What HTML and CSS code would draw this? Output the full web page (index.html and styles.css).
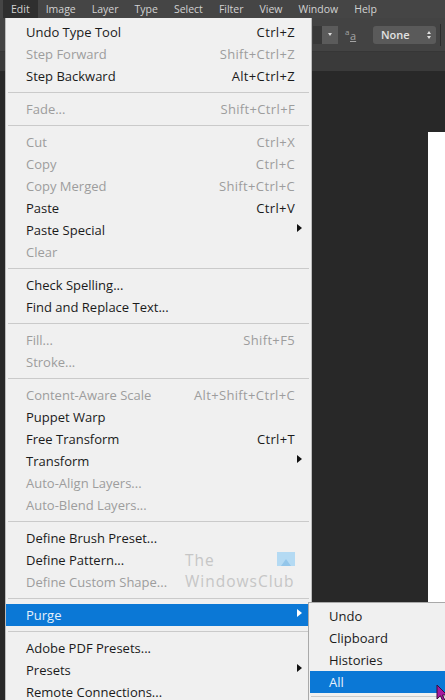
FILE: index.html
```html
<!DOCTYPE html>
<html>
<head>
<meta charset="utf-8">
<link rel="stylesheet" href="styles.css">
</head>
<body>
<div class="app">
  <div class="menubar">
    <span class="mb-item active">Edit</span>
    <span class="mb-item">Image</span>
    <span class="mb-item">Layer</span>
    <span class="mb-item">Type</span>
    <span class="mb-item">Select</span>
    <span class="mb-item">Filter</span>
    <span class="mb-item">View</span>
    <span class="mb-item">Window</span>
    <span class="mb-item">Help</span>
  </div>
  <div class="toolbar">
    <span class="tb-field"></span>
    <span class="tb-btn"><span class="tb-caret"></span></span>
    <span class="tb-aa"><span class="aa-sm">a</span><span class="aa-lg">a</span></span>
    <span class="tb-select">None<span class="tb-updown"><span class="up"></span><span class="down"></span></span></span>
    <span class="tb-divider"></span>
  </div>
  <div class="tabstrip"></div>
  <div class="canvas"><div class="doc"></div></div>

  <div class="menu">
    <div class="row"><span class="label">Undo Type Tool</span><span class="key">Ctrl+Z</span><span class="arrow-cell"></span></div>
    <div class="row dis"><span class="label">Step Forward</span><span class="key">Shift+Ctrl+Z</span><span class="arrow-cell"></span></div>
    <div class="row"><span class="label">Step Backward</span><span class="key">Alt+Ctrl+Z</span><span class="arrow-cell"></span></div>
    <div class="sep"></div>
    <div class="row dis"><span class="label">Fade...</span><span class="key">Shift+Ctrl+F</span><span class="arrow-cell"></span></div>
    <div class="sep"></div>
    <div class="row dis"><span class="label">Cut</span><span class="key">Ctrl+X</span><span class="arrow-cell"></span></div>
    <div class="row dis"><span class="label">Copy</span><span class="key">Ctrl+C</span><span class="arrow-cell"></span></div>
    <div class="row dis"><span class="label">Copy Merged</span><span class="key">Shift+Ctrl+C</span><span class="arrow-cell"></span></div>
    <div class="row"><span class="label">Paste</span><span class="key">Ctrl+V</span><span class="arrow-cell"></span></div>
    <div class="row"><span class="label">Paste Special</span><span class="key"></span><span class="arrow-cell"><span class="tri"></span></span></div>
    <div class="row dis"><span class="label">Clear</span><span class="key"></span><span class="arrow-cell"></span></div>
    <div class="sep"></div>
    <div class="row"><span class="label">Check Spelling...</span><span class="key"></span><span class="arrow-cell"></span></div>
    <div class="row"><span class="label">Find and Replace Text...</span><span class="key"></span><span class="arrow-cell"></span></div>
    <div class="sep"></div>
    <div class="row dis"><span class="label">Fill...</span><span class="key">Shift+F5</span><span class="arrow-cell"></span></div>
    <div class="row dis"><span class="label">Stroke...</span><span class="key"></span><span class="arrow-cell"></span></div>
    <div class="sep"></div>
    <div class="row dis"><span class="label">Content-Aware Scale</span><span class="key">Alt+Shift+Ctrl+C</span><span class="arrow-cell"></span></div>
    <div class="row"><span class="label">Puppet Warp</span><span class="key"></span><span class="arrow-cell"></span></div>
    <div class="row"><span class="label">Free Transform</span><span class="key">Ctrl+T</span><span class="arrow-cell"></span></div>
    <div class="row"><span class="label">Transform</span><span class="key"></span><span class="arrow-cell"><span class="tri"></span></span></div>
    <div class="row dis"><span class="label">Auto-Align Layers...</span><span class="key"></span><span class="arrow-cell"></span></div>
    <div class="row dis"><span class="label">Auto-Blend Layers...</span><span class="key"></span><span class="arrow-cell"></span></div>
    <div class="sep"></div>
    <div class="row"><span class="label">Define Brush Preset...</span><span class="key"></span><span class="arrow-cell"></span></div>
    <div class="row"><span class="label">Define Pattern...</span><span class="key"></span><span class="arrow-cell"></span></div>
    <div class="row dis"><span class="label">Define Custom Shape...</span><span class="key"></span><span class="arrow-cell"></span></div>
    <div class="sep"></div>
    <div class="row hl"><span class="label">Purge</span><span class="key"></span><span class="arrow-cell"><span class="tri"></span></span></div>
    <div class="sep"></div>
    <div class="row"><span class="label">Adobe PDF Presets...</span><span class="key"></span><span class="arrow-cell"></span></div>
    <div class="row"><span class="label">Presets</span><span class="key"></span><span class="arrow-cell"><span class="tri"></span></span></div>
    <div class="row"><span class="label">Remote Connections...</span><span class="key"></span><span class="arrow-cell"></span></div>

    <div class="watermark">
      <div class="wm-line">The</div>
      <div class="wm-line">WindowsClub</div>
      <svg class="wm-icon" width="18" height="14" viewBox="0 0 18 14">
        <rect x="0" y="0" width="18" height="14" fill="#b4daf3"/>
        <polygon points="4,14 9,7 14,14" fill="#93c6ea"/>
      </svg>
    </div>
  </div>

  <div class="submenu">
    <div class="srow">Undo</div>
    <div class="srow">Clipboard</div>
    <div class="srow">Histories</div>
    <div class="srow hl">All</div>
    <div class="ssep"></div>
  </div>

  <svg class="cursor" width="12" height="18" viewBox="0 0 12 18">
    <path d="M1 1 L1 15 L4.4 11.8 L6.8 17 L8.8 16.1 L6.5 11 L11 11 Z" fill="#a8189f" stroke="#3b0a3a" stroke-width="1"/>
  </svg>
</div>
</body>
</html>
```

FILE: styles.css
```css
html, body {
  margin: 0;
  padding: 0;
  background: #282828;
}

.app {
  position: relative;
  width: 445px;
  height: 700px;
  overflow: hidden;
  display: flex;
  flex-direction: column;
  font-family: "Open Sans", "Noto Sans", sans-serif;
}

.menubar {
  height: 18px;
  flex: none;
  background: #454545;
  display: flex;
  align-items: stretch;
  padding-left: 3px;
}

.mb-item {
  padding: 0 8px;
  font-size: 10.5px;
  line-height: 18px;
  color: #d2d2d2;
}

.mb-item.active {
  background: #2f2f2f;
}

.toolbar {
  height: 33px;
  flex: none;
  background: #434343;
  border-bottom: 1px solid #363636;
  display: flex;
  align-items: center;
  padding-left: 313px;
}

.tb-field {
  width: 9px;
  height: 18px;
  background: #383838;
}

.tb-btn {
  width: 16px;
  height: 18px;
  background: #5b5b5b;
  display: flex;
  align-items: center;
  justify-content: center;
}

.tb-caret {
  width: 0;
  height: 0;
  border-left: 2.5px solid transparent;
  border-right: 2.5px solid transparent;
  border-top: 3px solid #dcdcdc;
}

.tb-aa {
  margin-left: 7px;
  width: 15px;
  height: 18px;
  position: relative;
  color: #a4a4a4;
  font-size: 11px;
}

.aa-sm {
  position: absolute;
  left: 0;
  top: 0;
  font-size: 8px;
}

.aa-lg {
  position: absolute;
  left: 5px;
  top: 2px;
  font-size: 11px;
  text-decoration: underline;
}

.tb-select {
  margin-left: 13px;
  width: 63px;
  height: 18px;
  box-sizing: border-box;
  background: #5a5a5a;
  border-radius: 3px;
  color: #e2e2e2;
  font-size: 11px;
  font-weight: 600;
  line-height: 18px;
  padding-left: 8px;
  display: flex;
  align-items: center;
}

.tb-updown {
  margin-left: auto;
  margin-right: 5px;
  display: flex;
  flex-direction: column;
  gap: 2px;
}

.tb-updown .up {
  width: 0;
  height: 0;
  border-left: 2.5px solid transparent;
  border-right: 2.5px solid transparent;
  border-bottom: 3px solid #e0e0e0;
}

.tb-updown .down {
  width: 0;
  height: 0;
  border-left: 2.5px solid transparent;
  border-right: 2.5px solid transparent;
  border-top: 3px solid #e0e0e0;
}

.tb-divider {
  margin-left: 4px;
  width: 1px;
  height: 22px;
  background: #2c2c2c;
}

.tabstrip {
  height: 19px;
  flex: none;
  background: #3a3a3a;
}

.canvas {
  flex: 1;
  display: flex;
  justify-content: flex-end;
  padding-top: 61px;
  background: #282828;
}

.doc {
  width: 17px;
  background: #ffffff;
}

/* Edit menu */
.menu {
  position: absolute;
  left: 5px;
  top: 18px;
  width: 307px;
  height: 700px;
  box-sizing: border-box;
  background: #f0f0f0;
  border: 1px solid #bcbcbc;
  border-top: none;
  padding-top: 3px;
  font-size: 13px;
  color: #1b1b1b;
}

.row {
  height: 22px;
  display: flex;
  align-items: center;
  padding: 0 9px 0 20px;
}

.row .label {
  flex: 1;
  white-space: nowrap;
}

.row .key {
  white-space: nowrap;
  letter-spacing: 0.35px;
}

.row.dis {
  color: #9d9d9d;
}

.arrow-cell {
  width: 7px;
  flex: none;
  display: flex;
  justify-content: flex-end;
  align-items: center;
}

.tri {
  width: 0;
  height: 0;
  border-top: 4.5px solid transparent;
  border-bottom: 4.5px solid transparent;
  border-left: 5px solid #111111;
  margin-bottom: 4px;
}

.row.hl {
  background: #0b78d6;
  color: #e6f0fb;
}

.row.hl .tri {
  border-left-color: #ffffff;
}

.sep {
  height: 1px;
  background: #cacaca;
  margin: 5px 2px;
}

.watermark {
  position: absolute;
  left: 179px;
  top: 532px;
  width: 120px;
  font-size: 15.5px;
  line-height: 21px;
  letter-spacing: 1px;
  color: #c6c6c6;
}

.wm-line {
  height: 21px;
  white-space: nowrap;
}

.wm-icon {
  position: absolute;
  left: 92px;
  top: 2px;
}

/* Purge submenu */
.submenu {
  position: absolute;
  left: 308px;
  top: 602px;
  width: 140px;
  height: 110px;
  box-sizing: border-box;
  background: #f0f0f0;
  border: 1px solid #a9a9a9;
  border-right: none;
  padding-top: 2px;
  font-size: 13px;
  color: #1b1b1b;
}

.srow {
  height: 22px;
  line-height: 22px;
  padding-left: 20px;
}

.srow.hl {
  margin-left: 1px;
  padding-left: 19px;
  background: #0b78d6;
  color: #e6f0fb;
}

.ssep {
  height: 1px;
  background: #cacaca;
  margin: 3px 2px 0 2px;
}

.cursor {
  position: absolute;
  left: 436px;
  top: 684px;
}
```
